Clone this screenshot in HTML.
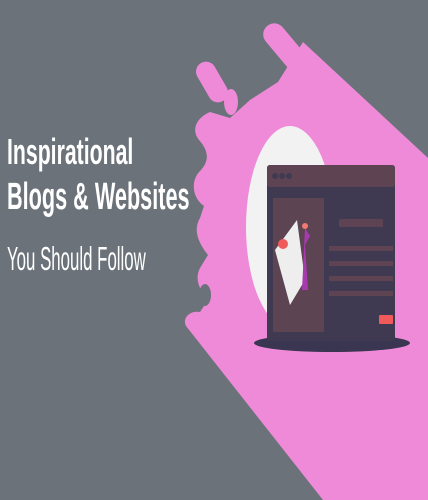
<!DOCTYPE html>
<html><head><style>
html,body{margin:0;padding:0}
body{width:428px;height:500px;background:#6b7279;position:relative;overflow:hidden;font-family:"Liberation Sans",sans-serif}
.t{position:absolute;left:7px;color:#fff;white-space:nowrap;transform-origin:0 0}
</style></head><body>
<svg width="428" height="500" style="position:absolute;left:0;top:0">
<g fill="#ee8ad8">
<path d="M303,42 L428,158 L428,500 L323,500 L186,326 C182,318 190,310 200,312 L208,300 C200,290 194,280 200,268 L208,255 C196,240 194,228 200,218 L204,206 C192,198 190,180 201,170 C210,160 208,150 199,140 C191,130 196,118 210,112 L230,118 L250,100 L278,82 Z"/>
<rect x="278" y="18" width="22" height="68" rx="11" transform="rotate(-40 289 52)"/>
<rect x="202" y="60" width="20" height="44" rx="10" transform="rotate(-30 212 82)"/>
<ellipse cx="231" cy="102" rx="7" ry="13"/>
</g>
<ellipse cx="205" cy="295" rx="6" ry="11" fill="#6b7279"/>
<ellipse cx="290" cy="227" rx="44" ry="101" fill="#f2f2f2"/>
<ellipse cx="332" cy="343" rx="78" ry="9" fill="#3a3550"/>
<rect x="267" y="165" width="128" height="176" rx="3" fill="#3f3a52"/>
<rect x="267" y="165" width="128" height="22" rx="3" fill="#5e4452"/>
<circle cx="275" cy="176" r="3" fill="#3f3a52"/><circle cx="282" cy="176" r="3" fill="#3f3a52"/><circle cx="289" cy="176" r="3" fill="#3f3a52"/>
<rect x="273" y="198" width="51" height="134" fill="#5c4452"/>
<polygon points="275,250 297,220 305,280 290,305" fill="#eee"/>
<circle cx="283" cy="244" r="5" fill="#f05a5a"/>
<path d="M305,228 L310,236 L305,245 L308,290 L302,290 Z" fill="#a83ab0"/>
<circle cx="305" cy="226" r="3" fill="#f07a70"/>
<rect x="339" y="219" width="44" height="8" rx="1" fill="#5e4452"/>
<rect x="329" y="246" width="64" height="5" fill="#5e4452"/>
<rect x="329" y="261" width="64" height="5" fill="#5e4452"/>
<rect x="329" y="276" width="64" height="5" fill="#5e4452"/>
<rect x="329" y="291" width="64" height="5" fill="#5e4452"/>
<rect x="379" y="315" width="14" height="9" rx="1" fill="#f05a5a"/>
</svg>
<div class="t" style="top:131px;font-size:36px;font-weight:bold;transform:scaleX(0.59)">Inspirational</div>
<div class="t" style="top:176px;font-size:38px;font-weight:bold;transform:scaleX(0.57)">Blogs &amp; Websites</div>
<div class="t" style="top:240px;font-size:33px;transform:scaleX(0.51)">You Should Follow</div>
</body></html>
